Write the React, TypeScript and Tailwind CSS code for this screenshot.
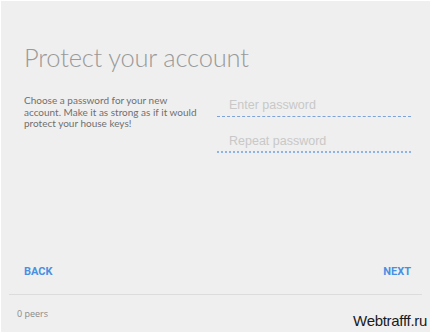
export default function App() {
  return (
    <div className="relative w-[432px] h-[333px] bg-white overflow-hidden">
      <div className="absolute left-[1px] top-[1px] right-[2px] bottom-[1px] bg-[#efefef] flex flex-col">
        <div className="flex-1 flex flex-col pl-[23px] pr-[19px]">
          <h1 className="mt-[40px] text-[25.5px] leading-[32px] font-light text-[#9a9a9a] font-['Lato',sans-serif] tracking-[-0.2px]">
            Protect your account
          </h1>
          <div className="mt-[24px] flex items-start">
            <p className="-mt-[2px] w-[176px] shrink-0 text-[10px] leading-[11.5px] text-[#6f6f6f] font-['Lato',sans-serif]">
              Choose a password for your new account. Make it as strong as if it would protect your house keys!
            </p>
            <div className="ml-auto w-[194px] flex flex-col gap-[17px] mt-[1px]">
              <div className="border-b border-dashed border-[#7da3d8] px-[12px] pb-[3px] text-[12.5px] leading-[15px] text-[#c8c8c8] font-['Liberation_Sans',sans-serif]">
                Enter password
              </div>
              <div className="border-b-2 border-dotted border-[#8cb4ea] px-[12px] pb-[2px] text-[12.5px] leading-[15px] text-[#c8c8c8] font-['Liberation_Sans',sans-serif]">
                Repeat password
              </div>
            </div>
          </div>
          <div className="mt-auto mb-[14px] flex justify-between text-[11px] font-bold text-[#4a90e2] font-['Roboto',sans-serif]">
            <button>BACK</button>
            <button>NEXT</button>
          </div>
        </div>
        <div className="mx-[8px] border-t border-[#dcdcdc]" />
        <div className="h-[37px] px-[16px] pt-[12px] text-[9px] text-[#8a8a8a] font-['Open_Sans',sans-serif]">
          0 peers
        </div>
      </div>
      <div className="absolute right-[5px] bottom-[3px] text-[15px] leading-[18px] text-[#1a1a1a] font-['Liberation_Sans',sans-serif] tracking-[-0.3px]">
        Webtrafff.ru
      </div>
    </div>
  );
}
